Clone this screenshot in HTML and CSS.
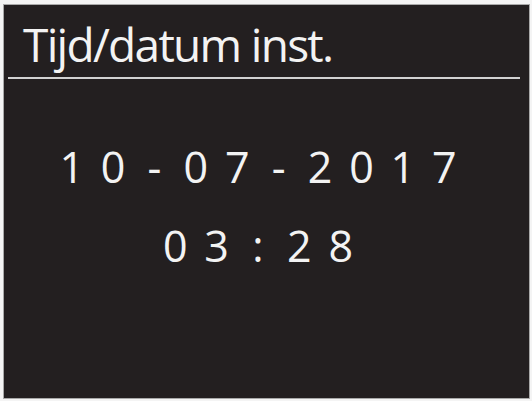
FILE: index.html
```html
<!DOCTYPE html>
<html lang="nl">
<head>
<meta charset="utf-8">
<title>Tijd/datum inst.</title>
<link rel="stylesheet" href="styles.css">
</head>
<body>
<div class="screen">
  <div class="title">Tijd/datum inst.</div>
  <div class="divider"></div>
  <div class="readout">
    <div class="row date">
      <span class="ch">1</span><span class="ch">0</span><span class="ch">-</span><span class="ch">0</span><span class="ch">7</span><span class="ch">-</span><span class="ch">2</span><span class="ch">0</span><span class="ch">1</span><span class="ch">7</span>
    </div>
    <div class="row time">
      <span class="ch">0</span><span class="ch">3</span><span class="ch">:</span><span class="ch">2</span><span class="ch">8</span>
    </div>
  </div>
</div>
</body>
</html>
```

FILE: styles.css
```css
html, body {
  margin: 0;
  padding: 0;
}
body {
  background: #f4f4f4;
  width: 532px;
  height: 401px;
  overflow: hidden;
  font-family: "Open Sans", "Noto Sans", sans-serif;
}
.screen {
  box-sizing: border-box;
  margin: 4px 0 0 3px;
  width: 527px;
  height: 395px;
  border: 1px solid #a9a9a9;
  background: #231f20;
  color: #f3f3f3;
  display: flex;
  flex-direction: column;
}
.title {
  font-size: 46px;
  font-weight: 500;
  line-height: 62px;
  letter-spacing: -1.7px;
  padding: 8px 0 0 19px;
  white-space: nowrap;
}
.divider {
  height: 2px;
  background: #d2d2d2;
  margin: 2px 9px 0 4px;
}
.readout {
  display: flex;
  flex-direction: column;
  align-items: center;
  padding-right: 17px;
  padding-top: 59px;
}
.row {
  display: flex;
  font-size: 43px;
  font-weight: 500;
  line-height: 58px;
}
.time {
  margin-top: 21px;
}
.ch {
  width: 41.4px;
  text-align: center;
}
```
